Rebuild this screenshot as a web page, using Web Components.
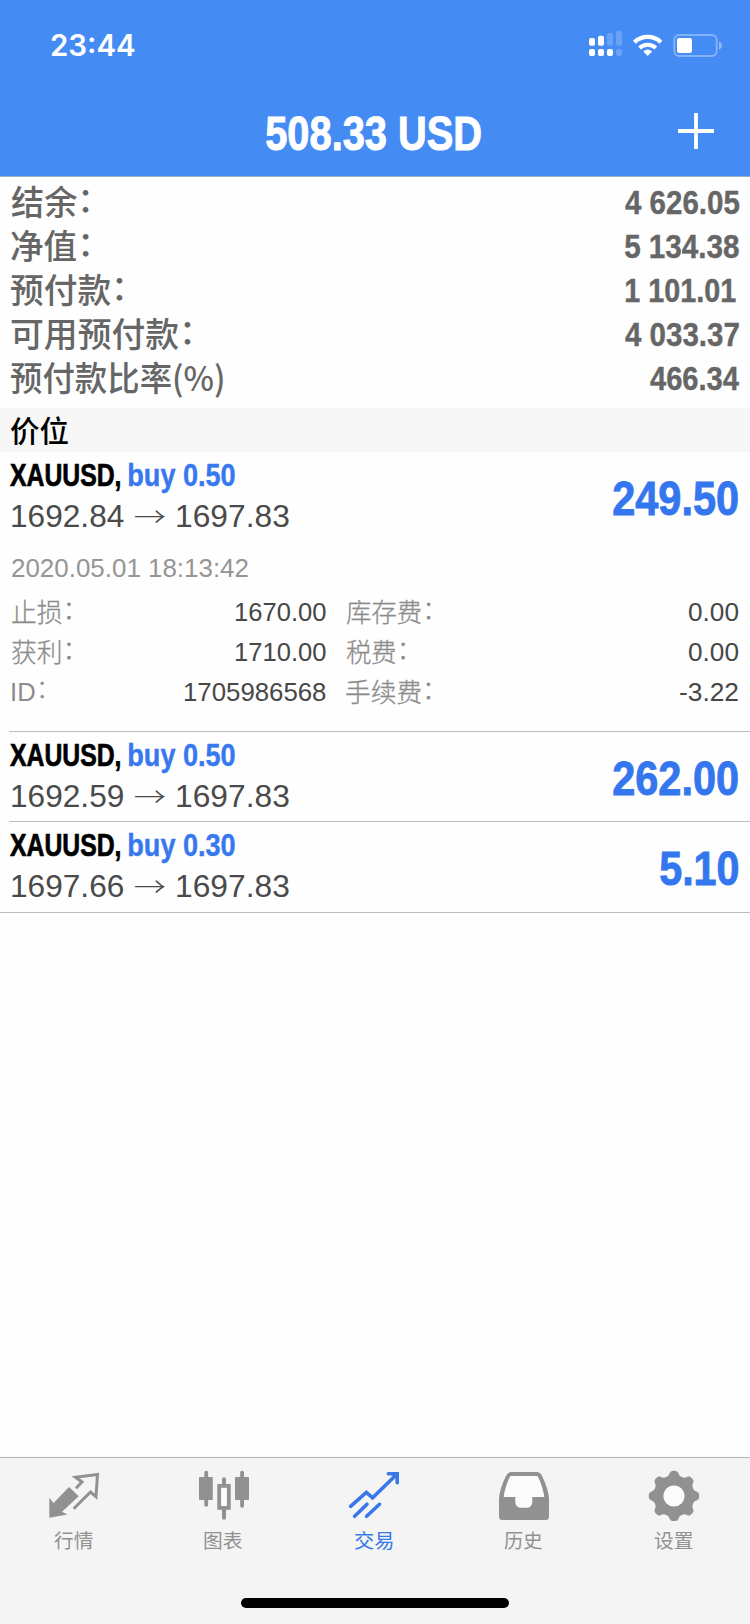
<!DOCTYPE html>
<html lang="zh-CN">
<head>
<meta charset="utf-8">
<title>交易</title>
<style>
html,body{margin:0;padding:0}
body{width:750px;height:1624px;overflow:hidden;background:#fefefe;font-family:"Liberation Sans","Noto Sans CJK SC",sans-serif}
</style>
</head>
<body>
<trade-app></trade-app>
<script>
const LATIN='"Liberation Sans","Noto Sans CJK SC",sans-serif';
const HAN='"Noto Sans CJK SC",sans-serif';
const UI='Inter,"Noto Sans CJK SC",sans-serif';
const FONTS={latin:LATIN,han:HAN,ui:UI};
const ctx=document.createElement('canvas').getContext('2d');

function define(name,html,setup){
  customElements.define(name,class extends HTMLElement{
    constructor(){
      super();
      const t=document.createElement('template');
      t.innerHTML=html;
      this.attachShadow({mode:'open'}).append(t.content.cloneNode(true));
    }
    connectedCallback(){ if(setup) setup(this,this.shadowRoot); }
  });
}

/* One line of text condensed to a given width; "base" is the baseline's distance from the top. */
define('fit-text',`<style>
:host{display:block;flex:none;white-space:pre;overflow:visible}
span{display:block;width:max-content;transform-origin:0 0}
b{font-weight:inherit;vertical-align:.1em;line-height:0}
</style><span></span>`,(el,root)=>{
  const a=n=>el.getAttribute(n), span=root.querySelector('span');
  const size=+a('size'), weight=a('weight')||'400', fam=FONTS[a('face')||'latin'];
  const w=+a('w'), base=+a('base'), text=a('text');
  ctx.font=`${weight} ${size}px ${fam}`;
  const m=ctx.measureText(text);
  const ink=m.actualBoundingBoxRight+m.actualBoundingBoxLeft;
  const s=w/ink;
  const half=(m.fontBoundingBoxAscent-m.fontBoundingBoxDescent)/2;
  span.innerHTML=text.replace('：','<b>：</b>');
  el.style.width=w+'px';
  el.style.height=(+a('h')||base)+'px';
  span.style.cssText=`font:${weight} ${size}px ${fam};line-height:${2*(base-half)}px;`+
    `transform:translateX(${m.actualBoundingBoxLeft*s}px) scaleX(${s});`+
    (a('bold')?`-webkit-text-stroke:${a('bold')}px currentColor;`:'');
});

define('status-bar',`<style>
:host{display:flex;justify-content:space-between;height:88px;color:#fff;padding-left:51px;box-sizing:border-box}
svg{display:block}
</style>
<fit-text text="23:44" face="ui" weight="560" size="29.5" w="84" base="56"></fit-text>
<svg width="170" height="88" viewBox="580 0 170 88" fill="#fff">
<rect x="589" y="38" width="6" height="7.7" rx="1.8"/><rect x="598" y="35.7" width="6" height="10" rx="1.8"/>
<rect x="607" y="33" width="6" height="12.7" rx="1.8" opacity=".2"/><rect x="616" y="30.7" width="6" height="15" rx="1.8" opacity=".2"/>
<rect x="589" y="49" width="6" height="7" rx="2"/><rect x="598" y="49" width="6" height="7" rx="2"/><rect x="607" y="49" width="6" height="7" rx="2"/>
<rect x="616" y="49" width="6" height="7" rx="2" opacity=".2"/>
<g fill="none" stroke="#fff"><path d="M634.4 42.2A19.5 19.5 0 0 1 661 42.2" stroke-width="4.3"/><path d="M639.6 47.9A12 12 0 0 1 655.8 47.9" stroke-width="4"/></g>
<path d="M647.7 55.9L643.3 51.4Q647.7 47.6 652.1 51.4Z"/>
<rect x="674.3" y="35" width="42.4" height="21" rx="5" fill="none" stroke="#fff" stroke-width="2" opacity=".34"/>
<rect x="677" y="38" width="15" height="15" rx="2.2"/>
<path d="M719 41.5Q722 42.6 722 45.5T719 49.5Z" opacity=".4"/>
</svg>`);

define('nav-bar',`<style>
:host{display:grid;grid-template-columns:1fr auto 1fr;height:88px;color:#fff}
fit-text{margin-right:4px}
svg{display:block;justify-self:end}
</style><i></i>
<fit-text text="508.33 USD" weight="700" size="49" w="215" base="62" bold="1"></fit-text>
<svg width="80" height="88" viewBox="670 88 80 88"><path d="M678 131H714M696 113V149" stroke="#fff" stroke-width="3.8"/></svg>`);

define('account-row',`<style>
:host{display:flex;justify-content:space-between;height:44px;padding:0 11.5px 0 10.5px;color:#666}
</style><slot></slot>`);

define('section-title',`<style>
:host{display:block;height:44px;background:#f7f7f7;color:#000;padding-left:10.3px}
</style><slot></slot>`);

define('position-row',`<style>
:host{display:block;box-sizing:border-box;height:var(--h,90px);position:relative}
.top{display:flex;justify-content:space-between;height:85px;padding:0 11.7px 0 9.7px}
.name{display:flex;color:#000;height:41px;gap:9.3px}
.buy{color:#3878ee}
.price{display:flex;color:#4a4a4a;padding-left:2px;height:44px}
.arrow{margin:0 11px 0 12px}
.profit{color:#3476ee}
hr{margin:0;border:0;height:1px;background:#bdbdbd;position:absolute;bottom:0;right:0;left:var(--inset,9px)}
</style>
<div class="top"><div><div class="name"></div><div class="price"></div></div><div class="profit"></div></div>
<slot></slot><hr>`,(el,root)=>{
  const a=n=>el.getAttribute(n);
  root.querySelector('.name').innerHTML=`<fit-text text="XAUUSD," weight="700" size="32" w="110" base="34" bold=".7"></fit-text>
  <fit-text class="buy" text="${a('side')}" weight="700" size="32" w="106" base="34" bold=".4"></fit-text>`;
  root.querySelector('.price').innerHTML=`<fit-text text="${a('open')}" size="32" w="111.5" base="34"></fit-text>
  <fit-text class="arrow" text="→" face="han" weight="300" size="27" w="31" base="34"></fit-text>
  <fit-text text="1697.83" size="32" w="112" base="34"></fit-text>`;
  root.querySelector('.profit').innerHTML=`<fit-text text="${a('profit')}" weight="700" size="49" w="${a('pw')}" base="63" bold=".9"></fit-text>`;
});

define('position-details',`<style>
:host{display:block;color:#8c8c8c;padding:0 11.3px 0 12.2px}
.date{color:#959595}
.grid{display:grid;grid-template-columns:314.3px 1fr;column-gap:20px;grid-auto-rows:40px}
.cell{display:flex;justify-content:space-between}
.v{color:#474747}
</style>
<fit-text class="date" text="2020.05.01 18:13:42" size="26" w="236.5" base="40" h="58"></fit-text>
<div class="grid"></div>`,(el,root)=>{
  const cells=[['止损：',59.5,'1670.00',91],['库存费：',85,'0.00',49.5],['获利：',59.5,'1710.00',91],['税费：',59.5,'0.00',49.5],['ID：',32.5,'1705986568',142],['手续费：',85,'-3.22',58.5]];
  root.querySelector('.grid').innerHTML=cells.map(([l,lw,v,vw])=>`<div class="cell"><fit-text text="${l}" face="${l[0]=='I'?'latin':'han'}" weight="300" size="26" w="${lw}" base="${l[0]=='I'?26:27}" bold="${l[0]=='I'?0:.3}"></fit-text><fit-text class="v" text="${v}" size="26" w="${vw}" base="26"></fit-text></div>`).join('');
});

define('tab-item',`<style>
:host{display:flex;flex-direction:column;align-items:center;width:150px;color:#919191}
:host([active]){color:#3878e8}
div{padding-right:3px}
</style><slot></slot><div></div>`,(el,root)=>{
  root.querySelector('div').innerHTML=`<fit-text text="${el.getAttribute('label')}" face="han" size="19.8" w="38.7" base="27.5"></fit-text>`;
});

define('tab-icon',`<style>:host{display:block;height:56px}svg{display:block}</style><svg width="150" height="56" viewBox="0 0 150 56" fill="currentColor"></svg>`,(el,root)=>{
  const gear=()=>{
    let d='';
    for(let i=0;i<360;i+=2){
      const t=i*Math.PI/180, c=Math.cos(8*t);
      const r=22.9+2.3*Math.tanh(1.7*c)/Math.tanh(1.7);
      d+=(i?'L':'M')+(74+r*Math.cos(t)).toFixed(2)+' '+(31+r*Math.sin(t)).toFixed(2);
    }
    return `<path d="${d}Z"/><circle cx="74" cy="31" r="10.6" fill="#fcfcfc"/>`;
  };
  const icons={
    quotes:'<path d="M49.3 32.7L53.5 38L69 22L78.7 31.3L62 46.8L67.3 49.5L49.3 52.7Z"/><path d="M76 23.3L82 17L75.5 12.3L97.5 9.4L96 31.6L90.5 27L73.7 43.7" fill="none" stroke="currentColor" stroke-width="3"/>',
    chart:'<rect x="49" y="12" width="13.8" height="23" rx="1"/><rect x="54.3" y="5.7" width="3.8" height="36" rx="1.8"/><rect x="85" y="12" width="14" height="23" rx="1"/><rect x="90.2" y="5.7" width="3.8" height="37" rx="1.8"/><rect x="72" y="12.3" width="4" height="42.4" rx="1.8"/><rect x="69.2" y="20.9" width="9.6" height="22" fill="#fcfcfc" stroke="currentColor" stroke-width="3.8"/>',
    trade:'<g fill="none" stroke="currentColor" stroke-width="3.6" stroke-linecap="round"><path d="M50.6 41.3L66.3 27.3L72.6 32.8L96 10"/><path d="M54.6 51.3L67 39.2M66.6 51.3L79.5 39.3"/><path d="M88.3 8.8H97.2V17.8"/></g><path d="M90 8H99V17Z"/>',
    history:'<path d="M49 34C49.3 26 53.5 16 56 11Q58 7 61.5 7H86.5Q90 7 92 11C94.5 16 98.7 26 99 34V51.5Q99 55 95.5 55H52.5Q49 55 49 51.5Z"/><path d="M60.5 11H87.5C90 15 93.5 25 94.3 32H82.3V36.5Q82.3 42.8 76 42.8H71.6Q65.3 42.8 65.3 36.5V32H53.8C54.5 25 58 15 60.5 11Z" fill="#fcfcfc"/>',
    settings:gear()
  };
  root.querySelector('svg').innerHTML=icons[el.getAttribute('name')];
});

define('tab-bar',`<style>
:host{display:flex;flex-direction:column;align-items:center;height:167px;box-sizing:border-box;border-top:1px solid #b4b4b4;background:#f4f4f4}
.tabs{display:flex;padding-top:7px;height:133px}
.home{width:268px;height:10px;border-radius:5px;background:#000}
</style><div class="tabs"><slot></slot></div><div class="home"></div>`);

define('trade-app',`<style>
:host{display:flex;flex-direction:column;width:750px;height:1624px;background:#fefefe}
header{background:#458bf4;border-bottom:1px solid #9daccb}
.account{padding:4px 0 7px}
main{flex:1}
</style>
<header><status-bar></status-bar><nav-bar></nav-bar></header>
<main>
<div class="account"></div>
<section-title><fit-text text="价位" face="han" weight="500" size="30" w="58" base="34"></fit-text></section-title>
<position-row side="buy 0.50" open="1692.84" profit="249.50" pw="125" style="--h:280px"><position-details></position-details></position-row>
<position-row side="buy 0.50" open="1692.59" profit="262.00" pw="125"></position-row>
<position-row side="buy 0.30" open="1697.66" profit="5.10" pw="78.5" style="--h:91px;--inset:0px"></position-row>
</main>
<tab-bar>
<tab-item label="行情"><tab-icon name="quotes"></tab-icon></tab-item>
<tab-item label="图表"><tab-icon name="chart"></tab-icon></tab-item>
<tab-item label="交易" active><tab-icon name="trade"></tab-icon></tab-item>
<tab-item label="历史"><tab-icon name="history"></tab-icon></tab-item>
<tab-item label="设置"><tab-icon name="settings"></tab-icon></tab-item>
</tab-bar>`,(el,root)=>{
  const rows=[['结余：',78,'4 626.05',114,0],['净值：',78,'5 134.38',113.7,0],['预付款：',112,'1 101.01',109.5,3.5],['可用预付款：',180,'4 033.37',114,0],['预付款比率(%)',212.5,'466.34',89,0]];
  root.querySelector('.account').innerHTML=rows.map(([l,lw,v,vw,mr])=>`<account-row><fit-text text="${l}" face="${l.includes('%')?'han':'latin'}" weight="${l.includes('%')?500:500}" size="34" w="${lw}" base="34.5"></fit-text><fit-text text="${v}" weight="700" size="34" w="${vw}" base="33" bold=".4" style="margin-right:${mr}px"></fit-text></account-row>`).join('');
});
</script>
</body>
</html>
